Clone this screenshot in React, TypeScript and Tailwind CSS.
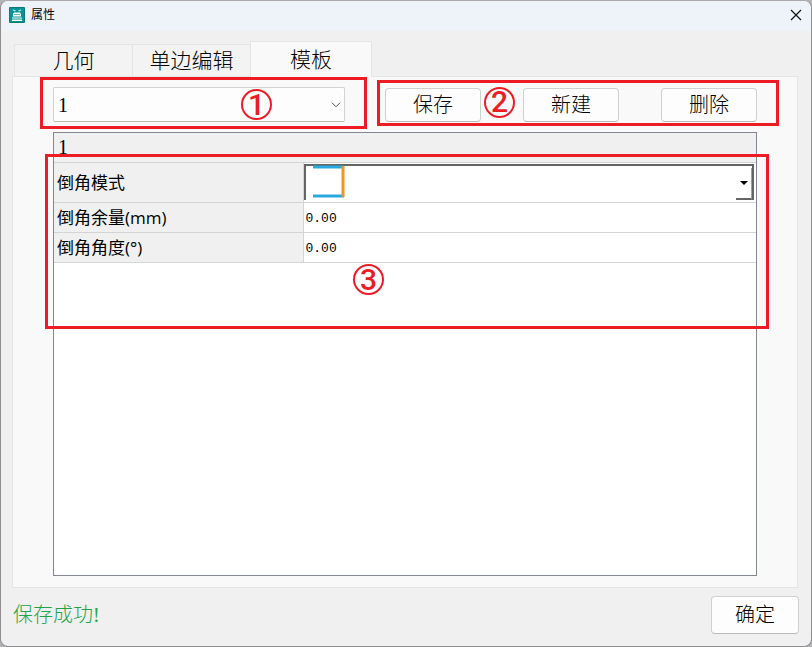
import { useState } from "react";

const tabs = ["几何", "单边编辑", "模板"];

const fields = [
  { id: "margin", label: "倒角余量(mm)", value: "0.00" },
  { id: "angle", label: "倒角角度(°)", value: "0.00" },
];

function AppIcon() {
  return (
    <svg viewBox="0 0 16 16" className="size-4 shrink-0" aria-hidden="true">
      <rect width="16" height="16" rx="1" fill="#0b9494" />
      <rect x="0.5" y="0.5" width="15" height="15" rx="1" fill="none" stroke="#087878" />
      <path d="M4 3l2.500 1M12 3L9.500 4" stroke="#cfeeee" strokeWidth="1.200" />
      <path d="M5 5.500h6l1 1.500v2.500H4V7z" fill="#fff" />
      <path d="M3 10.500h10v1H3zM3.500 12.500h9l1 1.500h-11z" fill="#fff" />
      <path d="M5 7.500h6" stroke="#5dbcbc" />
    </svg>
  );
}

function Marker({ n, className }: { n: number; className: string }) {
  return (
    <span
      className={`pointer-events-none absolute flex size-[31px] items-center justify-center rounded-full border-2 border-[#ed1c24] font-['Roboto',sans-serif] text-[30px] leading-7 font-medium text-[#ed1c24] ${className}`}
    >
      {n}
    </span>
  );
}

function Frame({ className }: { className: string }) {
  return <div className={`pointer-events-none absolute border-3 border-[#ed1c24] ${className}`} />;
}

function PushButton({ children, className }: { children: string; className: string }) {
  return (
    <button
      type="button"
      className={`rounded border border-[#d0d0d0] border-b-[#bababa] bg-[#fdfdfd] text-xl leading-6 ${className}`}
    >
      {children}
    </button>
  );
}

export default function App() {
  const [active, setActive] = useState("模板");

  return (
    <div className="flex min-h-screen flex-col bg-[#b5b3b5] font-['Liberation_Serif','Noto_Sans_CJK_SC',serif] font-light text-black">
      <div className="flex flex-1 flex-col overflow-hidden rounded-lg border border-[#8e8e90] border-t-[#aaa8aa] bg-[#f0f0f0]">
        {/* Title bar */}
        <header className="flex h-[30px] items-center gap-1.5 bg-[#eef3f9] pr-px pb-0.5 pl-2 font-['Open_Sans','Noto_Sans_CJK_SC',sans-serif] font-normal">
          <AppIcon />
          <h1 className="flex-1 text-xs">属性</h1>
          <button type="button" aria-label="关闭" className="flex h-full w-7 items-center justify-center">
            <svg viewBox="0 0 12 12" className="size-3" fill="none" stroke="#111" strokeWidth="1.200">
              <path d="M1 1l10 10M11 1L1 11" />
            </svg>
          </button>
        </header>

        {/* Tabs */}
        <div role="tablist" className="mx-3 flex items-end px-px pt-2.5 text-[21px]">
          {tabs.map((tab) => (
            <button
              key={tab}
              type="button"
              role="tab"
              aria-selected={tab === active}
              onClick={() => setActive(tab)}
              className={
                tab === active
                  ? "relative z-10 -mb-px h-9 w-[122px] border border-b-0 border-[#e5e5e5] bg-[#f9f9f9] leading-8"
                  : "h-8 w-[118px] border border-r-0 border-b-0 border-[#e5e5e5] bg-[#f3f3f3] leading-7"
              }
            >
              {tab}
            </button>
          ))}
        </div>

        {/* Template page */}
        <main className="mr-[13px] ml-[11px] flex flex-1 flex-col gap-2.5 border border-[#e5e5e5] bg-[#f9f9f9] px-10 pt-2.5 pb-[11px]">
          <div className="flex items-center gap-10">
            <div className="relative flex-1">
              <select
                aria-label="模板"
                className="block h-[35px] w-full appearance-none rounded-xs border border-[#d2d2d2] border-b-[#b8b8b8] bg-[#fdfdfd] px-1 text-xl"
              >
                <option>1</option>
              </select>
              <svg
                viewBox="0 0 10 6"
                className="pointer-events-none absolute top-[15px] right-1 h-1.5 w-2.5"
                fill="none"
                stroke="#555"
              >
                <path d="M1 0.800l4 4 4-4" />
              </svg>
              <Frame className="-top-2.5 -right-[22px] -bottom-[7px] -left-[13px]" />
              <Marker n={1} className="top-0.5 right-[73px]" />
            </div>
            <div className="relative flex gap-[42px]">
              <PushButton className="h-[34px] w-24">保存</PushButton>
              <PushButton className="h-[34px] w-24">新建</PushButton>
              <PushButton className="h-[34px] w-24">删除</PushButton>
              <Frame className="-top-2 -right-[22px] -bottom-1 -left-2" />
              <Marker n={2} className="-top-px left-[99px]" />
            </div>
          </div>

          <div className="relative flex-1 border border-[#828790] bg-white">
            <table className="w-full table-fixed border-collapse font-['Open_Sans','Noto_Sans_CJK_SC',sans-serif] text-[17px] font-normal">
              <colgroup>
                <col className="w-[249px]" />
                <col />
              </colgroup>
              <thead>
                <tr className="h-[29px] border-b border-[#d4d4d4] bg-[#f0f0f0]">
                  <th colSpan={2} className="px-1 text-left font-['Liberation_Serif',serif] text-xl leading-7 font-normal">
                    1
                  </th>
                </tr>
              </thead>
              <tbody>
                <tr className="h-10 border-b border-[#d4d4d4]">
                  <th scope="row" className="border-r border-[#d4d4d4] bg-[#f0f0f0] px-[3px] pt-0.5 text-left font-normal">
                    <label htmlFor="mode">倒角模式</label>
                  </th>
                  <td className="p-0">
                    <div className="relative mr-0.5">
                      <select
                        id="mode"
                        className="block h-9 w-full appearance-none border-t-2 border-r-2 border-l-2 border-t-[#646464] border-r-[#646464] border-l-[#646464] bg-white"
                      >
                        <option value="square" aria-label="直角" />
                      </select>
                      <svg viewBox="0 0 34 34" className="pointer-events-none absolute top-px left-2 size-[34px]" fill="none">
                        <path d="M1 2h31M1 31h31" stroke="#2aa9e0" strokeWidth="3" />
                        <path d="M31 1v31" stroke="#f7931e" strokeWidth="3" />
                      </svg>
                      <span className="pointer-events-none absolute right-0.5 bottom-0 flex h-8 w-4 items-center justify-center border-r border-b-2 border-r-[#a0a0a0] border-b-[#646464]">
                        <svg viewBox="0 0 8 4" className="h-1 w-2">
                          <path d="M0 0h8L4 4z" />
                        </svg>
                      </span>
                    </div>
                  </td>
                </tr>
                {fields.map((field) => (
                  <tr key={field.id} className="h-[30px] border-b border-[#d4d4d4]">
                    <th scope="row" className="border-r border-[#d4d4d4] bg-[#f0f0f0] px-[3px] pt-0.5 text-left leading-6 font-normal">
                      <label htmlFor={field.id}>{field.label}</label>
                    </th>
                    <td className="p-0 pt-1">
                      <input
                        id={field.id}
                        defaultValue={field.value}
                        className="block w-full px-0.5 font-['Liberation_Mono',monospace] text-[13px] leading-6"
                      />
                    </td>
                  </tr>
                ))}
              </tbody>
            </table>
            <Frame className="top-[21px] -right-[13px] -left-[9px] h-[175px]" />
            <Marker n={3} className="top-[131px] left-[299px]" />
          </div>
        </main>

        <footer className="flex items-center justify-between px-3 pt-2 pb-3">
          <p role="status" className="text-xl leading-6 text-[#22a34a]">
            保存成功!
          </p>
          <PushButton className="h-[38px] w-22">确定</PushButton>
        </footer>
      </div>
    </div>
  );
}
